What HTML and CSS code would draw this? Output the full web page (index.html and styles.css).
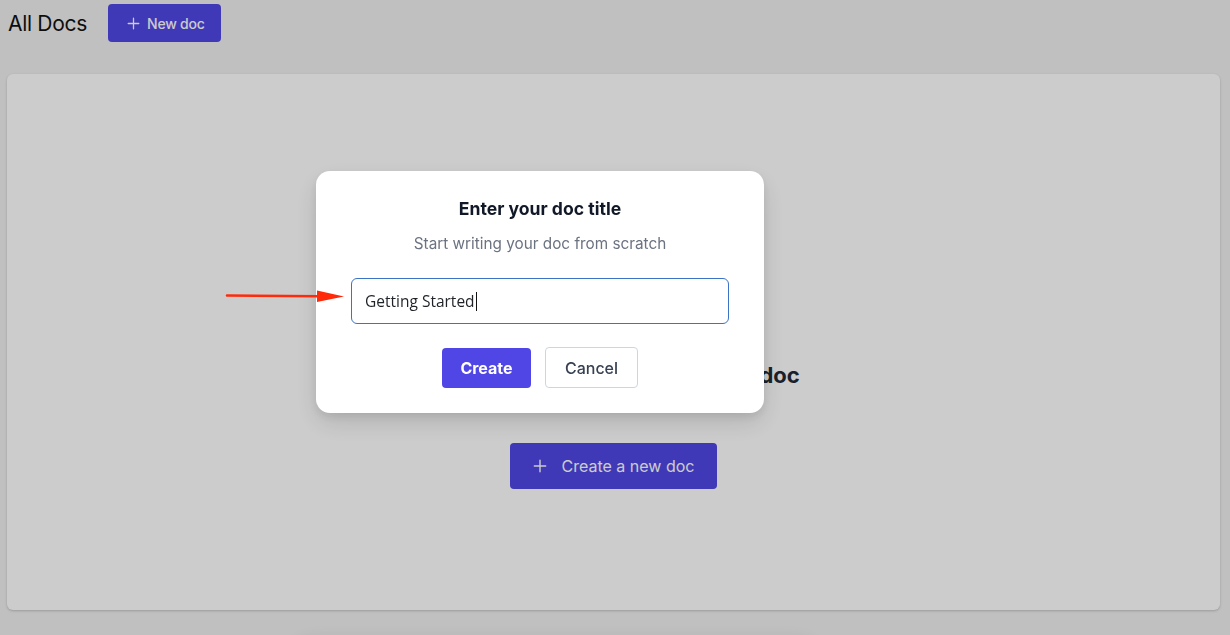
FILE: index.html
```html
<!DOCTYPE html>
<html lang="en">
<head>
<meta charset="utf-8">
<title>All Docs</title>
<link rel="stylesheet" href="styles.css">
</head>
<body>
  <header class="topbar">
    <h1 class="page-title">All Docs</h1>
    <button class="btn btn-primary btn-sm">
      <svg class="plus" viewBox="0 0 16 16" width="13" height="13"><path d="M8 1.5v13M1.5 8h13" stroke="currentColor" stroke-width="1.6" stroke-linecap="round" fill="none"/></svg>
      <span>New doc</span>
    </button>
  </header>

  <main class="card">
    <div class="empty">
      <h2 class="empty-title">Get started by creating a new doc</h2>
      <button class="btn btn-primary btn-lg">
        <svg class="plus" viewBox="0 0 16 16" width="14" height="14"><path d="M8 1.5v13M1.5 8h13" stroke="currentColor" stroke-width="1.6" stroke-linecap="round" fill="none"/></svg>
        <span>Create a new doc</span>
      </button>
    </div>
  </main>

  <div class="toast-shadow"></div>
  <div class="overlay"></div>

  <div class="modal">
    <h3 class="modal-title">Enter your doc title</h3>
    <p class="modal-sub">Start writing your doc from scratch</p>
    <div class="field"><span class="field-text">Getting Started</span><span class="caret"></span></div>
    <div class="actions">
      <button class="btn btn-create">Create</button>
      <button class="btn btn-cancel">Cancel</button>
    </div>
  </div>

  <svg class="arrow" width="130" height="20" viewBox="0 0 130 20">
    <line x1="2" y1="8.5" x2="96" y2="9.3" stroke="#ff2a0a" stroke-width="2.6" stroke-linecap="round"/>
    <polygon points="92,3.5 119,9.5 92,15" fill="#ff2a0a"/>
  </svg>
</body>
</html>
```

FILE: styles.css
```css
* { box-sizing: border-box; }

html, body {
  margin: 0;
  height: 100%;
}

body {
  background: #f0f0f0;
  font-family: Inter, "Noto Sans", "Liberation Sans", sans-serif;
  color: #111827;
  overflow: hidden;
}

.topbar {
  display: flex;
  align-items: center;
  gap: 21px;
  padding: 4px 8px 0 8px;
  height: 42px;
}

.page-title {
  margin: 0;
  font-size: 21px;
  font-weight: 400;
  color: #111111;
  letter-spacing: -0.3px;
}

.btn {
  font-family: inherit;
  border: none;
  cursor: pointer;
  display: inline-flex;
  align-items: center;
  justify-content: center;
}

.btn-primary {
  background: #4f46e5;
  color: #ffffff;
  border-radius: 4px;
}

.btn-sm {
  height: 38px;
  padding: 0 16px 0 19px;
  gap: 7px;
  font-size: 14px;
  font-weight: 500;
  letter-spacing: -0.2px;
}

.btn-lg {
  height: 46px;
  width: 207px;
  gap: 15px;
  font-size: 16px;
  font-weight: 400;
}

.card {
  margin: 32px 10px 0 7px;
  height: 536px;
  background: #ffffff;
  border-radius: 6px;
  box-shadow: 0 1px 3px rgba(0,0,0,0.12), 0 1px 2px rgba(0,0,0,0.08);
  display: flex;
  justify-content: center;
}

.empty {
  display: flex;
  flex-direction: column;
  align-items: center;
  padding-top: 287px;
}

.empty-title {
  margin: 0;
  font-size: 22px;
  font-weight: 700;
  color: #1f2937;
  line-height: 28px;
  word-spacing: 2px;
}

.empty .btn-lg {
  margin-top: 54px;
}

.toast-shadow {
  position: fixed;
  left: 300px;
  top: 650px;
  width: 510px;
  height: 40px;
  border-radius: 8px;
  background: #f0f0f0;
  box-shadow: 0 0 24px 6px rgba(0,0,0,0.12);
}

.overlay {
  position: fixed;
  inset: 0;
  background: rgba(0,0,0,0.2);
}

.modal {
  position: fixed;
  left: 316px;
  top: 171px;
  width: 448px;
  height: 242px;
  background: #ffffff;
  border-radius: 14px;
  box-shadow: 0 10px 25px rgba(0,0,0,0.12), 0 4px 10px rgba(0,0,0,0.08);
  padding: 28px 35px 25px 35px;
  display: flex;
  flex-direction: column;
  align-items: stretch;
}

.modal-title {
  margin: 0;
  text-align: center;
  font-size: 17.6px;
  line-height: 20px;
  font-weight: 700;
  color: #111827;
}

.modal-sub {
  margin: 15px 0 0 0;
  text-align: center;
  font-size: 15.3px;
  line-height: 20px;
  color: #6b7280;
}

.field {
  margin-top: 24px;
  height: 46px;
  border: 1px solid #3b74c4;
  border-radius: 6px;
  display: flex;
  align-items: center;
  padding-left: 13px;
  font-size: 15.5px;
  color: #1f2328;
  font-family: "Open Sans", "Noto Sans", sans-serif;
}

.caret {
  display: inline-block;
  width: 1px;
  height: 19px;
  background: #111;
  margin-left: 1px;
}

.actions {
  margin-top: 24px;
  display: flex;
  justify-content: center;
  gap: 14px;
}

.btn-create {
  width: 89px;
  height: 40px;
  border-radius: 4px;
  background: #4f46e5;
  color: #fff;
  font-size: 16px;
  font-weight: 700;
}

.btn-cancel {
  width: 93px;
  height: 41px;
  margin-top: -1px;
  border-radius: 4px;
  background: #fff;
  border: 1px solid #d1d5db;
  color: #374151;
  font-size: 16px;
  font-weight: 500;
}

.arrow {
  position: fixed;
  left: 225px;
  top: 287px;
}
```
